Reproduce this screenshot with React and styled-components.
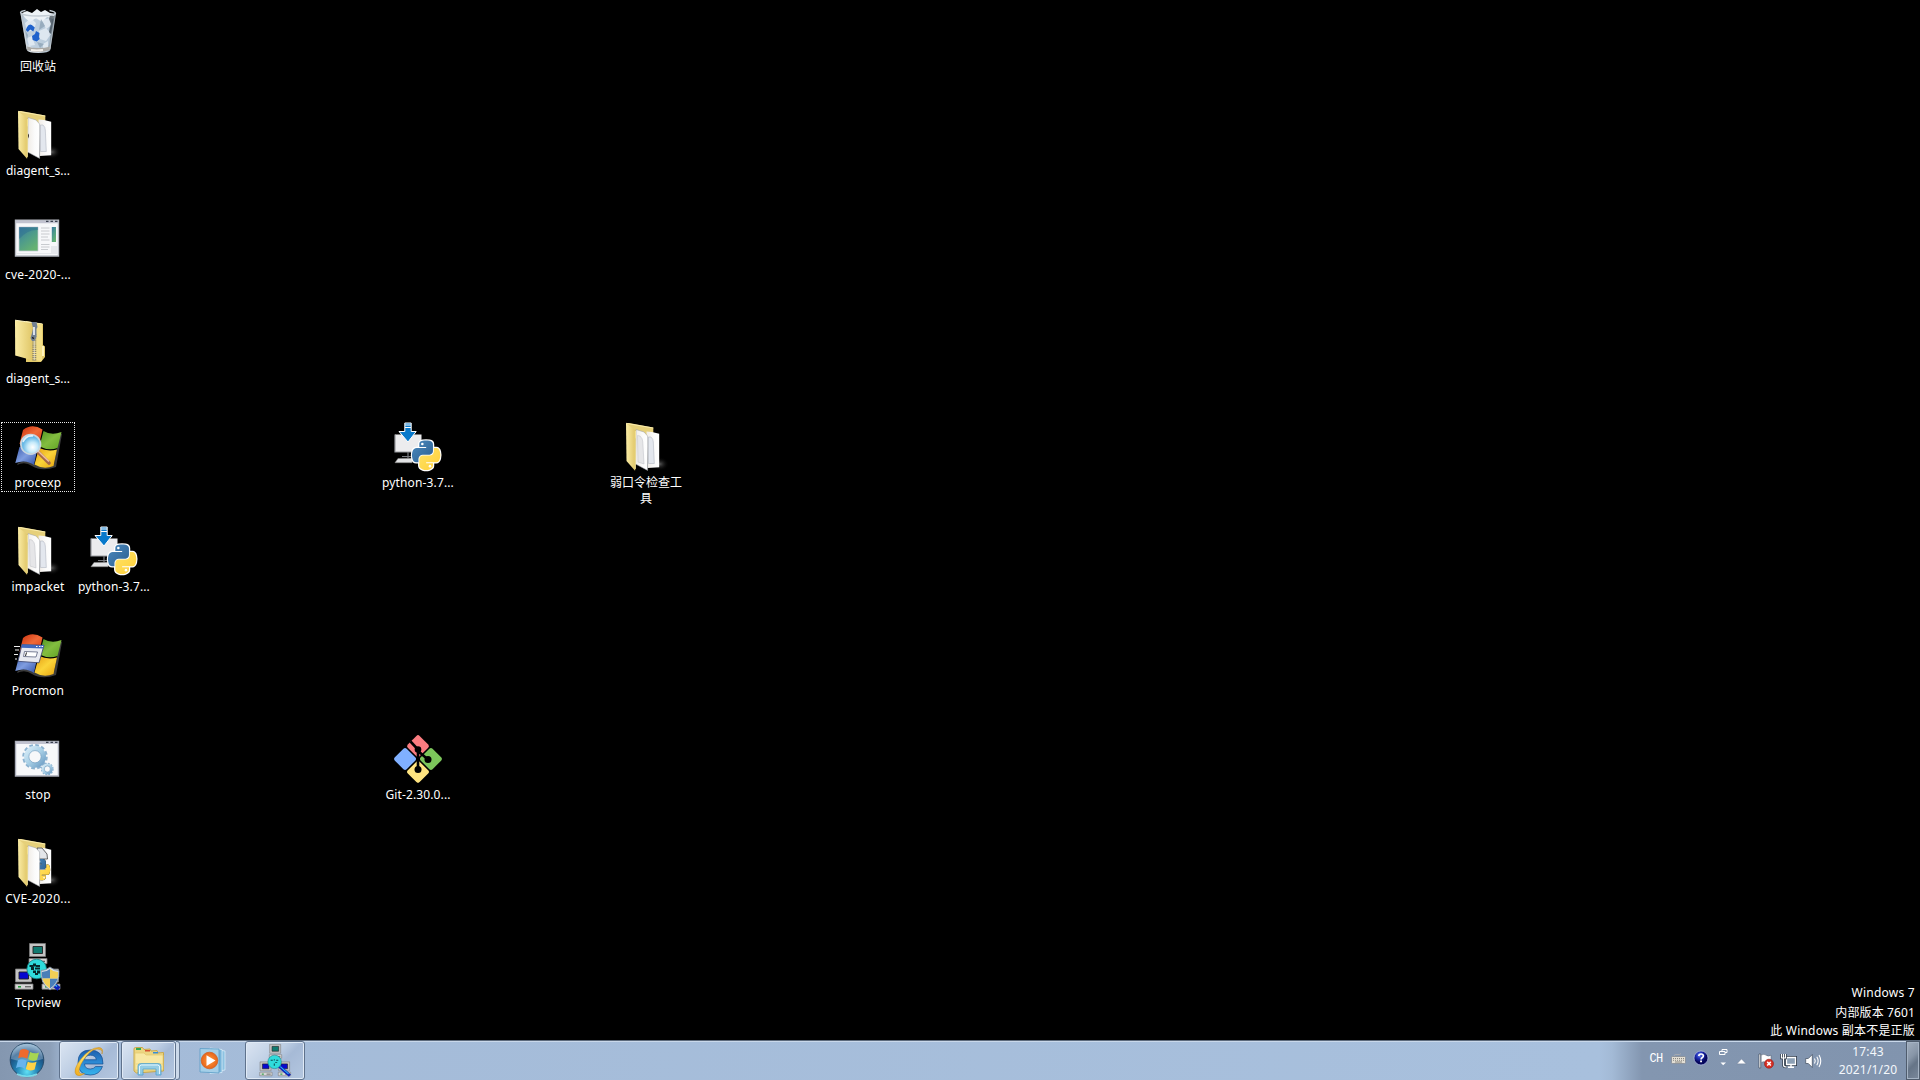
import React from 'react';
import styled, { createGlobalStyle } from 'styled-components';

const GlobalStyle = createGlobalStyle`
  * { box-sizing: border-box; }
  body { margin: 0; background: #000; overflow: hidden; }
`;

const Screen = styled.div`
  display: flex;
  flex-direction: column;
  width: 1920px;
  height: 1080px;
  background: #000;
  font-family: "Noto Sans", "Noto Sans CJK SC", sans-serif;
  font-size: 12px;
  color: #fff;
`;

const Desktop = styled.main`
  flex: 1;
  min-height: 0;
  display: grid;
  grid-template-columns: repeat(25, 76px);
  grid-template-rows: repeat(10, 104px);
`;

const Tile = styled.div`
  grid-column: ${(p) => p.$col + 1};
  grid-row: ${(p) => p.$row + 1};
  width: 74px;
  height: 70px;
  margin: 6px 1px;
  display: flex;
  flex-direction: column;
  align-items: center;
  gap: 4px;
  border: 1px dotted ${(p) => (p.$focused ? '#e8e8e8' : 'transparent')};
`;

const Glyph = styled.svg`
  display: block;
  flex: none;
  width: ${(p) => p.$w || 48}px;
  height: ${(p) => p.$h || p.$w || 48}px;
  overflow: visible;
`;

const Defs = styled.svg`
  position: absolute;
  width: 0;
  height: 0;
`;

const Label = styled.span`
  width: 100%;
  line-height: 16px;
  text-align: center;
  white-space: ${(p) => (p.$wrap ? 'normal' : 'nowrap')};
  letter-spacing: ${(p) => p.$track || 0}px;
`;

const Watermark = styled.aside`
  grid-column: 20 / 26;
  grid-row: 10;
  justify-self: end;
  align-self: end;
  width: 240px;
  margin-right: -15px;
  display: flex;
  flex-direction: column;
  align-items: flex-end;
`;

const Notice = styled.span`
  line-height: ${(p) => p.$line}px;
  letter-spacing: ${(p) => p.$track}px;
`;

const Bar = styled.footer`
  flex: none;
  height: 40px;
  display: flex;
  border-top: 1px solid #5c6a7c;
  box-shadow: inset 0 1px 0 #c9d8ea;
  background: linear-gradient(90deg, #8497b0 0, #8c9fb8 50px, #a4bbd8 68px, #a8c0dd 1600px, #a3bad6 1612px, #8396b0 1642px, #8194ae 100%);
`;

const StartButton = styled.button`
  width: 59px;
  padding: 0 0 1px 7px;
  border: 0;
  background: none;
  display: flex;
  align-items: center;
`;

const TaskButton = styled.button`
  width: ${(p) => p.$w}px;
  height: 39px;
  margin-right: ${(p) => p.$after || 0}px;
  padding: 0;
  display: flex;
  align-items: center;
  justify-content: center;
  border: 1px solid ${(p) => (p.$open ? '#5f728c' : 'transparent')};
  border-radius: 3px;
  background: ${(p) => (p.$open ? 'linear-gradient(135deg, #dbe5f2 0%, #bccde3 45%, #a6bad6 60%, #b4c7e0 100%)' : 'none')};
  box-shadow: ${(p) => (p.$open ? 'inset 0 0 0 1px #e0eaf6' : 'none')};
`;

const StackEdge = styled.span`
  width: 4px;
  height: 39px;
  border: 1px solid #667a95;
  border-left: 0;
  border-radius: 0 3px 3px 0;
  background: #cbd9ea;
`;

const Tray = styled.div`
  margin-left: auto;
  display: flex;
  align-items: center;
`;

const TraySlot = styled.div`
  width: ${(p) => p.$w}px;
  height: 39px;
  display: flex;
  flex-direction: column;
  align-items: center;
  justify-content: center;
  padding-top: ${(p) => p.$down || 0}px;
  padding-bottom: ${(p) => p.$up || 0}px;
`;

const Lang = styled.span`
  font: 12px/14px "Liberation Mono", monospace;
  letter-spacing: -0.8px;
`;

const Clock = styled.div`
  width: 78px;
  padding-left: 2px;
  display: flex;
  flex-direction: column;
  align-items: center;
  line-height: 18px;
  font-size: 12px;
  letter-spacing: 0.15px;
  color: #f4f8fc;
`;

const ShowDesktop = styled.button`
  width: 14px;
  height: 39px;
  padding: 0;
  border: 1px solid #4f5c6d;
  box-shadow: inset 0 0 0 1px #a5b3c4;
  background: linear-gradient(135deg, #a2afbf 0%, #8795a7 40%, #657487 60%, #7b899c 100%);
`;

const Gradients = () => (
  <Defs aria-hidden="true">
    <defs>
      <linearGradient id="folder" x1="0" x2="1"><stop offset="0" stopColor="#fbeda6" /><stop offset="1" stopColor="#dfc566" /></linearGradient>
      <linearGradient id="paper" x1="0" x2="1"><stop offset="0" stopColor="#f0ece6" /><stop offset=".6" stopColor="#fbfbfb" /><stop offset="1" stopColor="#fff" /></linearGradient>
      <radialGradient id="shade"><stop offset="0" stopColor="#555" /><stop offset="1" stopColor="#000" stopOpacity="0" /></radialGradient>
      <linearGradient id="photo" x1="0" y1="0" x2=".6" y2="1"><stop offset="0" stopColor="#3a74a0" /><stop offset=".5" stopColor="#4d9a8c" /><stop offset="1" stopColor="#66b272" /></linearGradient>
      <linearGradient id="red" x1="0" y1="0" x2="1" y2="1"><stop offset="0" stopColor="#c82e0c" /><stop offset=".5" stopColor="#f06a38" /><stop offset="1" stopColor="#d7380f" /></linearGradient>
      <linearGradient id="green" x1="0" y1="0" x2="1" y2="1"><stop offset="0" stopColor="#4d9321" /><stop offset=".5" stopColor="#83bd40" /><stop offset="1" stopColor="#5fa322" /></linearGradient>
      <linearGradient id="blue" x1="0" y1="0" x2="1" y2="1"><stop offset="0" stopColor="#3556a8" /><stop offset=".5" stopColor="#7f9de0" /><stop offset="1" stopColor="#2e4ea6" /></linearGradient>
      <linearGradient id="gold" x1="0" y1="0" x2="1" y2="1"><stop offset="0" stopColor="#e39c12" /><stop offset=".5" stopColor="#fbd43a" /><stop offset="1" stopColor="#e6a30e" /></linearGradient>
      <radialGradient id="lens" cx=".6" cy=".65"><stop offset="0" stopColor="#fff" /><stop offset=".5" stopColor="#c6eafa" /><stop offset="1" stopColor="#69b9e6" /></radialGradient>
      <linearGradient id="gear" x1="0" y1="0" x2="1" y2="1"><stop offset="0" stopColor="#d7ecf7" /><stop offset=".5" stopColor="#a8cfe6" /><stop offset="1" stopColor="#6f9fc6" /></linearGradient>
      <linearGradient id="glass" x1="0" x2="1"><stop offset="0" stopColor="#a8b4bf" /><stop offset=".3" stopColor="#dfe7ee" /><stop offset=".75" stopColor="#b9c9d6" /><stop offset="1" stopColor="#5f6b76" /></linearGradient>
      <linearGradient id="pyBlue" x1="0" y1="0" x2="1" y2="1"><stop offset="0" stopColor="#4b8abf" /><stop offset="1" stopColor="#2c5f90" /></linearGradient>
      <linearGradient id="pyGold" x1="0" y1="0" x2="1" y2="1"><stop offset="0" stopColor="#ffe366" /><stop offset="1" stopColor="#ffcf3a" /></linearGradient>
      <radialGradient id="orb" cx=".5" cy=".85" r=".8"><stop offset="0" stopColor="#5fe0f5" /><stop offset=".4" stopColor="#2382b4" /><stop offset=".75" stopColor="#1c4f80" /><stop offset="1" stopColor="#7fa5c4" /></radialGradient>
      <linearGradient id="ie" x1="0" y1="0" x2="0" y2="1"><stop offset="0" stopColor="#1c5fae" /><stop offset=".5" stopColor="#2c8ad4" /><stop offset="1" stopColor="#35b3ec" /></linearGradient>
      <linearGradient id="halo" x1="0" y1="1" x2="1" y2="0"><stop offset="0" stopColor="#f0a818" /><stop offset=".5" stopColor="#ffe36a" /><stop offset="1" stopColor="#eba92a" /></linearGradient>
      <radialGradient id="play"><stop offset="0" stopColor="#ff9a3c" /><stop offset="1" stopColor="#e7651a" /></radialGradient>
      <radialGradient id="help" cx=".4" cy=".3"><stop offset="0" stopColor="#6d83ea" /><stop offset=".5" stopColor="#1c2cb4" /><stop offset="1" stopColor="#05075c" /></radialGradient>
    </defs>
  </Defs>
);

const PY_TOP = 'M54.9 0C50.3 0 46 .4 42.1 1.1 30.8 3.1 28.7 7.3 28.7 15v10.2h26.8v3.4H18.7C10.9 28.6 4 33.3 1.9 42.2c-2.5 10.2-2.6 16.6 0 27.3 1.9 7.9 6.5 13.6 14.2 13.6h9.2V70.8c0-8.9 7.7-16.7 16.8-16.7h26.7c7.4 0 13.4-6.1 13.4-13.6V15c0-7.3-6.1-12.7-13.4-13.9C64.2.3 59.5 0 54.9 0z';
const PY_LOW = 'M85.6 28.7v11.9c0 9.2-7.8 17-16.8 17H42.1c-7.3 0-13.4 6.3-13.4 13.6v25.5c0 7.3 6.3 11.5 13.4 13.6 8.5 2.5 16.6 2.9 26.8 0 6.7-1.9 13.4-5.9 13.4-13.6V86.5H55.5v-3.4h40.2c7.8 0 10.7-5.4 13.4-13.6 2.8-8.4 2.7-16.5 0-27.3-1.9-7.8-5.6-13.6-13.4-13.6z';

const PythonMark = ({ transform, halo = 10 }) => (
  <g transform={transform}>
    <g stroke="#fff" strokeWidth={halo} strokeLinejoin="round"><path d={PY_TOP} /><path d={PY_LOW} /></g>
    <path d={PY_TOP} fill="url(#pyBlue)" />
    <path d={PY_LOW} fill="url(#pyGold)" />
    <circle cx="40.5" cy="13.5" r="5" fill="#fff" /><circle cx="70.5" cy="98" r="5" fill="#fff" />
  </g>
);

const RecycleBin = () => (
  <Glyph viewBox="0 0 48 48">
    <path d="M6.5 6.5 12.8 43q1 3 11.500 3t12-3L41.800 6.500z" fill="url(#glass)" />
    <path d="m9 9 4 28 6 4 10 1 6-4 4-28-14 3z" fill="#b8cbdc" opacity=".8" />
    <path d="m8 6 5-2 5 2 5-4 4 3 4-2 5 3 5 1-2 5-6-2-5 5-6-4-6 4-5-4z" fill="#eef3f7" />
    <path d="m11 16 6-5 5 5-2 7-7 2zM28 13l8-2 2 7-6 4zM25 24l7-3 5 6-5 7-6-2zM13 31l5-2 3 9-6 1zM29 37l5-3 0 7-5 2z" fill="#e6eef5" opacity=".8" />
    <path d="m27 12 4 7-6 4zM35 21l3-6-2 14zM23 35l7 2-4 4zM11 23l3 5-1 5z" fill="#8fa4b6" opacity=".8" />
    <path d="m36 8 4 1-3 18-2-2 2-8-2-5z" fill="#38434d" opacity=".7" />
    <path d="M12.800 20.500q2-4 5-2.500l3 2.500-1.500 4-3-2-2.500 2.500-2-2zM18 29l3-2 1-3 3.500 2-.6 4 .8 2-3 2.500-4-1.500z" fill="#1f62cc" />
    <path d="M13 43q11 4 23 0l.6-3.500q-12 3-24 0z" fill="#aaa9a6" />
    <path d="M17 43q6 1 12 0" stroke="#f5f2ed" strokeWidth="2" fill="none" />
    <path d="M6.500 6q0-2 5-2.500M6.500 6q3 3 18 3t17-2.500q0-2-6-3" stroke="#c3ccd4" strokeWidth="1.300" fill="none" />
    <path d="M7 7l6 35M41.500 7 36 42" stroke="#dde4ea" strokeWidth=".8" opacity=".7" />
  </Glyph>
);

const Folder = ({ variant }) => (
  <Glyph viewBox="0 0 48 48">
    <ellipse cx="38" cy="41" rx="9" ry="7" fill="url(#shade)" />
    <path d="M4 .3 7 0l24.300 4.500V12L14 16z" fill="#e6d07a" />
    <path d="M4 .3 31.300 5" stroke="#fff3b8" strokeWidth=".8" />
    <path d="M24.500 8.500 30 9l7.200 1.800v33.500l-11.500.6z" fill="url(#paper)" />
    {variant !== 'python' && <path d="M26.500 14h2.500q2.300 2 2.300 5l1 21.500h-5.800z" fill="#e3e7ee" stroke="#b4b9c4" strokeWidth=".6" />}
    {variant === 'python' && (
      <g>
        <path d="M23 9h5l5 6 .5 5H25z" fill="#e4e6e9" stroke="#444" strokeWidth=".8" />
        <PythonMark transform="translate(19.500 20) scale(.15 .19)" halo={0} />
      </g>
    )}
    <path d="M14 6.500 22 9l3.600 4v34.400L13.500 41z" fill="url(#paper)" stroke="#999ca3" strokeWidth=".5" />
    {variant === 'pages' && <path d="M15.500 12.500 18 13q2.800 2.500 2.800 6L22 41l-6-2z" fill="#e6e6e8" stroke="#bdbfc4" strokeWidth=".5" />}
    {variant === 'dot' && <path d="M14 22.500q2 2 0 5z" fill="#3a352c" />}
    <path d="M4 .3 13.700 7.500v37L13 47.800 4.500 38z" fill="url(#folder)" />
    <path d="M13.400 8v38" stroke="#fff0aa" strokeWidth=".7" />
  </Glyph>
);

const AppWindow = () => (
  <Glyph viewBox="0 0 48 48">
    <path d="M1.500 5.200h43V41h-43z" fill="#f7f8fa" stroke="#b7bac2" strokeWidth="1.400" />
    <path d="M2 5.500h42v2.700H2z" fill="#c2c3d0" />
    <path d="M32 6.300h2.500M36.500 6.300H39M41 6.300h2.500" stroke="#39404e" strokeWidth="1.200" />
    <path d="M5 12h19v24H5z" fill="url(#photo)" stroke="#c5ccd2" strokeWidth=".7" />
    <path d="M5 24q9-10 19-9v-3H5z" fill="#2b6f91" opacity=".5" />
    <path d="M37.800 12H42v15h-4.200z" fill="url(#photo)" />
    <path d="M27 13h8.500M27 16h8.500M27 19h8.500M27 22h7M27 25h8.500M27 29.500h8.500M27 32h8.500M27 34.500h7" stroke="#c2c5ca" strokeWidth=".9" />
    <path d="M37 31h6v8H3v-1h34z" fill="#e6e8ec" />
  </Glyph>
);

const ZipFolder = () => (
  <Glyph viewBox="0 0 48 48">
    <path d="m12 2 17 3v21l2 1.500V38L27 43H12z" fill="#e3ca6a" />
    <path d="M1 1.200 19 3.500v38L1.200 36.500z" fill="url(#folder)" />
    <path d="M1 1.200 28.500 5" stroke="#fff6c4" />
    <path d="m19 4 9 1v37l-9-1z" fill="#f3df88" />
    <path d="M29 27v10" stroke="#fff3bd" strokeWidth="2" />
    <path d="M20.300 15v27" stroke="#8d856c" strokeWidth="4" strokeDasharray="1.200 .9" />
    <path d="M20.300 17v24" stroke="#e6e2d2" strokeWidth=".8" />
    <path d="M17.500 3h5l1 5-1 2v8l-2 4h-2.500l-1.500-3 1.500-5 1-5z" fill="#718092" />
    <path d="M20 8v8" stroke="#e6edf5" strokeWidth="1.800" />
    <path d="m18.500 18 1 2" stroke="#222" strokeWidth="1.500" />
  </Glyph>
);

const FlagBase = () => (
  <g>
    <path d="M3 42q8-4 15 1 10 6 24 1l6-33-2-1-6 31q-11 5-20 0-7-5-16-1z" fill="#3c3c3c" />
    <path d="M9 7q9-7 19.500-.5L25 22q-9-5-19.500-1z" fill="url(#red)" />
    <path d="M29.500 8q8 5 18 1l-4 16q-9 3-18-1.500z" fill="url(#green)" />
    <path d="M5.500 24q9-4 18 1L20 42q-8-6-18.700-2z" fill="url(#blue)" />
    <path d="M25 25q9 4 18 1.500L39.500 43q-10 4-19-1.500z" fill="url(#gold)" />
  </g>
);

const ProcExp = () => (
  <Glyph viewBox="0 0 48 48">
    <FlagBase />
    <path d="m24 29 11 11" stroke="#a5674a" strokeWidth="3.600" strokeLinecap="round" />
    <path d="m24 28 11 10.500" stroke="#efbfa0" strokeWidth="1.600" />
    <circle cx="16.700" cy="21.300" r="9.800" fill="url(#lens)" stroke="#c8d5df" strokeWidth="1.700" />
    <path d="M9 19q3-7 10-6" stroke="#fff" strokeWidth="1.500" fill="none" opacity=".8" />
  </Glyph>
);

const ProcMon = () => (
  <Glyph viewBox="0 0 48 48">
    <FlagBase />
    <path d="M0 15.500h6M1 19h4M0 23.500h4M1 28h2" stroke="#eee" strokeWidth="1.200" />
    <path d="m8 13.500 22 .8-5 17.500-21-1.500z" fill="#e8eaf1" stroke="#39436c" strokeWidth=".8" />
    <path d="m8 13.500 22 .8-1 3.200-22-.7z" fill="#4168bd" />
    <path d="M22 15.500h1.500M25 15.500h1.500M27.500 15.500H29" stroke="#fff" strokeWidth="1.200" />
    <path d="m10.500 20.500 13 .5-1.500 5-12.500-.5z" fill="#fff" stroke="#59617c" strokeWidth=".8" />
    <path d="m12.500 21.500-1 3.500" stroke="#222" />
  </Glyph>
);

const Gear = ({ x, y, r }) => (
  <g>
    <circle cx={x} cy={y} r={r * 0.88} fill="none" stroke="#8cb2d0" strokeWidth={r * 0.2} strokeDasharray={`${r * 0.28} ${r * 0.18}`} />
    <circle cx={x} cy={y} r={r * 0.66} fill="none" stroke="url(#gear)" strokeWidth={r * 0.37} />
    <circle cx={x} cy={y} r={r * 0.47} fill="none" stroke="#6796bb" strokeWidth=".6" />
  </g>
);

const BatchFile = () => (
  <Glyph viewBox="0 0 48 48">
    <path d="M1.500 6.500h43V41h-43z" fill="#f7f8fa" stroke="#a9acb8" strokeWidth="1.400" />
    <path d="M2 6.500h42V9H2z" fill="#c2c3d0" />
    <path d="M32 7.300h2.500M36.500 7.300H39M41 7.300h2.500" stroke="#39404e" strokeWidth="1.200" />
    <Gear x={21} y={21.7} r={13} />
    <Gear x={33.3} y={34} r={6.5} />
  </Glyph>
);

const PythonSetup = () => (
  <Glyph viewBox="0 0 48 48">
    <path d="M1 11.500h26.500v17.500H1z" fill="#ececee" />
    <path d="M1 11.500v17.500h18" stroke="#999ba0" strokeWidth="1.200" fill="none" />
    <path d="M14 29v6M8 33.500h11" stroke="#77797e" strokeWidth="1.200" />
    <path d="m4 35.500 15-.3-1 4.500H1z" fill="#e2e3e5" stroke="#888" strokeWidth=".6" />
    <path d="M10.800 0h6.400v8.500h5L14 19 5 8.500h5.800z" fill="#0879cb" stroke="#fff" />
    <path d="M11 2h6M11 4.500h6" stroke="#fff" strokeWidth="1.200" />
    <PythonMark transform="translate(18 17.500) scale(.255 .262)" />
  </Glyph>
);

const GitSetup = () => (
  <Glyph viewBox="0 0 48 48">
    <g transform="rotate(45 24 24)">
      <rect x="6.500" y="6.500" width="16.700" height="16.700" rx="2.300" fill="#fa7c80" />
      <rect x="24.800" y="6.500" width="16.700" height="16.700" rx="2.300" fill="#7cc65b" />
      <rect x="6.500" y="24.800" width="16.700" height="16.700" rx="2.300" fill="#80b0ff" />
      <rect x="24.800" y="24.800" width="16.700" height="16.700" rx="2.300" fill="#ffe480" />
    </g>
    <path d="m16.500 6.500 7.500 8v20M24 16l10 8.500" stroke="#000" strokeWidth="2.600" fill="none" />
    <circle cx="24" cy="14.500" r="3.300" /><circle cx="34" cy="24.500" r="3.500" /><circle cx="24" cy="34.500" r="3.500" />
  </Glyph>
);

const Computer = ({ x, y, screen }) => (
  <g transform={`translate(${x} ${y})`}>
    <path d="M.5 0h16v13H.5z" fill="#c4c4c4" stroke="#7a7a7a" strokeWidth=".8" />
    <path d="M4 3h9.500v7H4z" fill={screen} stroke="#222" strokeWidth=".9" />
    <path d="M0 15h18v5.200H0z" fill="#d5d5d5" stroke="#777" strokeWidth=".8" />
    <path d="M3 17.800h3" stroke="#1c9a35" strokeWidth="1.500" /><path d="M10 17.800h6" stroke="#444" />
  </g>
);

const TcpArt = ({ shield }) => (
  <g>
    <Computer x={15} y={0.5} screen="#117a70" />
    <Computer x={1} y={26} screen="#0708cf" />
    <Computer x={28} y={26} screen="#0708cf" />
    <path d="m29 32 16 14" stroke="#0d1fb8" strokeWidth="4.500" />
    <path d="m31 33 12 10.500" stroke="#28bafa" strokeWidth="1.500" />
    <circle cx="22.700" cy="26" r="9.800" fill="#2fdcdc" stroke="#1b7f84" strokeWidth=".8" />
    {shield ? (
      <path d="M15.500 22h4v2h-4zM19 20.500h3v3h-3zM22 22h4v2h-4zM17 24h3v3h-3zM21 24.500h5v2h-5zM19 27.500h3v2.500h-3zM23 27.500h3v3h-3zM21 30h3v2h-3z" fill="#06292b" />
    ) : (
      <path d="M17 23h3v1.300h-3zM21.500 22h1.500v2h-1.500zM25 23h3v1.300h-3zM23.500 26h3v1.300h-3zM21.500 28.500h1.500v3h-1.500z" fill="#0b4a50" />
    )}
    {shield && (
      <g>
        <path d="M36 24q4 3.500 9 3.500 1 13-9 19.500-10-6.500-9-19.500 5 0 9-3.500z" fill="#d8dfe6" stroke="#7e8d9c" strokeWidth=".8" />
        <path d="M36 26v9.500h-7.600q-.8-3-.4-6.500 4.500 0 8-3zM36 35.500h7.600Q42 41.500 36 45.500z" fill="#4a7fb8" />
        <path d="M36 26q3.500 3 8 3 .4 3.500-.4 6.500H36zM36 35.500v10q-6-4-7.600-10z" fill="#f2cf55" />
      </g>
    )}
  </g>
);

const TcpView = () => <Glyph viewBox="0 0 48 48"><TcpArt shield /></Glyph>;

const StartOrb = () => (
  <Glyph $w={40} $h={38} viewBox="0 0 40 38">
    <circle cx="20" cy="19" r="16.800" fill="url(#orb)" stroke="#294c6b" />
    <path d="M4 18Q5 3 20 3t16 15q-16 5-32 0z" fill="#e4f2fb" opacity=".3" />
    <g transform="translate(8.500 7) scale(.49)">
      <path d="M9 5q9-6 18.500 1L24 22q-9-6-18.500-1z" fill="#ee6a2d" />
      <path d="M30 8q8 5 18 1l-4 15q-9 4-18-1z" fill="#a7d652" />
      <path d="M5 25q9-5 18 1L19 43q-8-7-18-2z" fill="#68b4ed" />
      <path d="M25 28q9 4 18 0l-4 16q-10 4-18-1z" fill="#ffd246" />
    </g>
    <path d="M10 33q10 5 20 0" stroke="#8cf5ff" strokeWidth="1.500" fill="none" opacity=".8" />
  </Glyph>
);

const Explorer = () => (
  <Glyph $w={34} viewBox="0 0 34 34">
    <path d="M2 5q0-1.500 1.500-1.500h7L12 5.500l6-.5 1 2 6-.5 1 2.500 5.500-.5V27l-27 2L2 27z" fill="#edd682" stroke="#c9a84b" />
    <path d="M4 4h5v2H4z" fill="#33a952" /><path d="M13 6h5v1.500h-5z" fill="#d55230" /><path d="M21 8h5v1.500h-5z" fill="#378ed4" />
    <path d="M3 9h9l2 2h17v15H3z" fill="#f8e8a4" stroke="#e2c970" strokeWidth=".7" />
    <path d="M4 20h27" stroke="#ead27a" strokeWidth=".8" />
    <path d="M6 31V22q0-2.500 3-2.500h17q3 0 3 2.500v9h-5v-6H11v6z" fill="#8ccbea" stroke="#4b9fce" strokeWidth=".8" opacity=".92" />
    <path d="M7.500 30v-8l2-1h16l2 1v8" stroke="#e0f5ff" fill="none" />
  </Glyph>
);

const InternetExplorer = () => (
  <Glyph $w={34} viewBox="0 0 34 34">
    <path d="M31 20H12.500q.5 5 5.800 5 3.500 0 5.200-2.500H30.500Q27.500 31 18.200 31 6 31 6 18.500T18.300 6Q31 6 31 20zM24.300 15.700q-.5-4.500-5.800-4.500t-6 4.500z" fill="url(#ie)" stroke="#174f91" strokeWidth=".7" fillRule="evenodd" />
    <path d="M30 10q2-6-3-6.500Q18 3.500 9 15T4.500 31q3 2 8-1.500-5 1.500-5.500-2Q7 21 14.500 12T28 5.500q3 .5 2 4.500z" fill="url(#halo)" stroke="#c58a1d" strokeWidth=".5" />
  </Glyph>
);

const MediaPlayer = () => (
  <Glyph $w={28} viewBox="0 0 28 28">
    <path d="m14 2 12 2v19l-12 2z" fill="#8fc3e2" stroke="#dff1fa" strokeWidth=".7" />
    <path d="m11 1 12 1.500v23l-12 1z" fill="#7ab6db" stroke="#dff1fa" strokeWidth=".7" />
    <path d="M1 1.500 20 2v24L1 25z" fill="#a4cfe8" stroke="#5c9dc6" strokeWidth=".8" />
    <circle cx="10.500" cy="13.500" r="8.300" fill="url(#play)" stroke="#d1601f" strokeWidth=".8" />
    <path d="m7.500 8.300 9 5.200-9 5.500z" fill="#fff" />
  </Glyph>
);

const Keyboard = () => (
  <Glyph $w={15} $h={10} viewBox="0 0 15 10">
    <path d="M3 2Q3 0 6 .5T10-.5" stroke="#a4a9b0" fill="none" />
    <rect x=".5" y="2.500" width="14" height="7" rx="1" fill="#e2ded4" stroke="#858a92" strokeWidth=".8" />
    <path d="M2 4.500h11M2 6.300h11" stroke="#8b8982" strokeDasharray="1 1" /><path d="M4 8h7" stroke="#8b8982" />
  </Glyph>
);

const Help = () => (
  <Glyph $w={16} viewBox="0 0 16 16">
    <circle cx="8" cy="8" r="7" fill="url(#help)" stroke="#b8c2e8" strokeWidth=".7" />
    <path d="M5.700 6q.3-2 2.400-2t2.300 1.800q0 1.200-1.300 1.900-1 .6-1 1.800" fill="none" stroke="#fff" strokeWidth="1.700" />
    <path d="M7.100 10.600h1.900v1.700H7.100z" fill="#fff" />
  </Glyph>
);

const LangOptions = () => (
  <Glyph $w={9} $h={18} viewBox="0 0 9 18">
    <path d="M3 2.500V.5h5v3H6M.5 2.500H6v3H.5z" fill="none" stroke="#fff" />
    <path d="M1.500 13.500h5.500L4.200 16.300z" fill="#fff" />
  </Glyph>
);

const Chevron = () => (
  <Glyph $w={9} $h={5} viewBox="0 0 9 5"><path d="M4.500 0 9 4.800H0z" fill="#fff" stroke="#5b6b80" strokeWidth=".3" /></Glyph>
);

const ActionFlag = () => (
  <Glyph $w={16} viewBox="0 0 16 16">
    <path d="M1 1h1.700v14H1z" fill="#fff" stroke="#333d4b" strokeWidth=".6" />
    <path d="M3.200 2q3-1.500 5 .2t4.800 0v7.200q-3 1.400-5 0t-4.800 0z" fill="#fff" stroke="#535f70" strokeWidth=".5" />
    <circle cx="11" cy="10.700" r="4.500" fill="#d82e24" stroke="#8e1914" strokeWidth=".6" />
    <path d="m9.200 8.900 3.600 3.600m0-3.600-3.600 3.600" stroke="#fff" strokeWidth="1.500" />
  </Glyph>
);

const Network = () => (
  <Glyph $w={16} viewBox="0 0 16 16">
    <path d="M5.500 4.500h9v7h-9z" fill="#8da0b5" stroke="#2d3948" strokeWidth="3" />
    <path d="M5.500 4.500h9v7h-9z" fill="#8da0b5" stroke="#fff" strokeWidth="1.300" />
    <path d="M7 14.300h6M10 12v2" stroke="#fff" strokeWidth="1.400" />
    <path d="M.5 1v4h4V1M2.500 1v11q0 2 3 2" stroke="#263241" strokeWidth="2.600" fill="none" />
    <path d="M.5 1v4h4V1M2.500 1v11q0 2 3 2" stroke="#fff" strokeWidth="1.200" fill="none" />
  </Glyph>
);

const Volume = () => (
  <Glyph $w={16} viewBox="0 0 16 16">
    <path d="M.7 5.500h2.600l4-4v13l-4-4H.7z" fill="#fff" stroke="#3d4a5b" strokeWidth=".7" />
    <path d="M9.500 5.500q1.500 2.500 0 5M11.800 3.700q2.700 4.300 0 8.600M14 2q3.500 6 0 12" stroke="#fff" strokeWidth="1.100" fill="none" />
  </Glyph>
);

const shortcuts = [
  { col: 0, row: 0, name: '回收站', art: <RecycleBin /> },
  { col: 0, row: 1, name: 'diagent_s...', art: <Folder variant="dot" />, track: 0.03 },
  { col: 0, row: 2, name: 'cve-2020-...', art: <AppWindow />, track: 0.22 },
  { col: 0, row: 3, name: 'diagent_s...', art: <ZipFolder />, track: 0.03 },
  { col: 0, row: 4, name: 'procexp', art: <ProcExp />, focused: true, track: 0.2 },
  { col: 0, row: 5, name: 'impacket', art: <Folder variant="pages" />, track: 0.18 },
  { col: 0, row: 6, name: 'Procmon', art: <ProcMon />, track: 0.2 },
  { col: 0, row: 7, name: 'stop', art: <BatchFile />, track: 0.2 },
  { col: 0, row: 8, name: 'CVE-2020...', art: <Folder variant="python" />, track: 0.3 },
  { col: 0, row: 9, name: 'Tcpview', art: <TcpView />, track: 0.3 },
  { col: 1, row: 5, name: 'python-3.7...', art: <PythonSetup />, track: 0.14 },
  { col: 5, row: 4, name: 'python-3.7...', art: <PythonSetup />, track: 0.14 },
  { col: 5, row: 7, name: 'Git-2.30.0...', art: <GitSetup />, track: 0.12 },
  { col: 8, row: 4, name: '弱口令检查工具', art: <Folder variant="pages" />, wrap: true },
];

export default function App() {
  return (
    <Screen>
      <GlobalStyle />
      <Gradients />
      <Desktop>
        {shortcuts.map((s) => (
          <Tile key={`${s.col}-${s.row}`} $col={s.col} $row={s.row} $focused={s.focused}>
            {s.art}
            <Label $wrap={s.wrap} $track={s.track}>{s.name}</Label>
          </Tile>
        ))}
        <Watermark>
          <Notice $line={20} $track={0.25}>Windows 7</Notice>
          <Notice $line={19} $track={0.12}>内部版本 7601</Notice>
          <Notice $line={18} $track={0.2}>此 Windows 副本不是正版</Notice>
        </Watermark>
      </Desktop>
      <Bar>
        <StartButton aria-label="Start"><StartOrb /></StartButton>
        <TaskButton $w={60} $after={2} $open><InternetExplorer /></TaskButton>
        <TaskButton $w={55} $open><Explorer /></TaskButton>
        <StackEdge />
        <TaskButton $w={65}><MediaPlayer /></TaskButton>
        <TaskButton $w={60} $open>
          <Glyph $w={33} viewBox="0 0 48 48"><TcpArt /></Glyph>
        </TaskButton>
        <Tray>
          <TraySlot $w={22} $up={3}><Lang>CH</Lang></TraySlot>
          <TraySlot $w={22} $up={3}><Keyboard /></TraySlot>
          <TraySlot $w={24} $up={5}><Help /></TraySlot>
          <TraySlot $w={20} $up={5}><LangOptions /></TraySlot>
          <TraySlot $w={17} $down={1}><Chevron /></TraySlot>
          <TraySlot $w={31} $down={1}><ActionFlag /></TraySlot>
          <TraySlot $w={16} $down={1}><Network /></TraySlot>
          <TraySlot $w={31} $down={1}><Volume /></TraySlot>
          <Clock><span>17:43</span><span>2021/1/20</span></Clock>
          <ShowDesktop aria-label="Show desktop" />
        </Tray>
      </Bar>
    </Screen>
  );
}
